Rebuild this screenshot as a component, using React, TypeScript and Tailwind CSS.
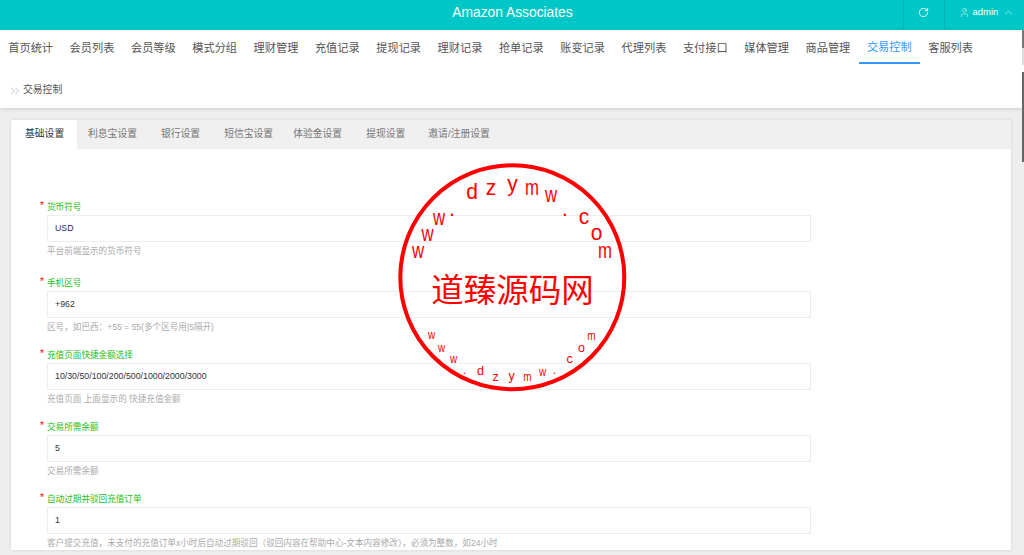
import { RotateCw, User, ChevronUp, ChevronsRight } from "lucide-react";

const nav = ["首页统计","会员列表","会员等级","模式分组","理财管理","充值记录","提现记录","理财记录","抢单记录","账变记录","代理列表","支付接口","媒体管理","商品管理","交易控制","客服列表"];
const tabs = [
  { t: "利息宝设置", c: "pl-[11px] pr-[12px]" },
  { t: "银行设置", c: "px-[12px]" },
  { t: "短信宝设置", c: "pl-[12px] pr-[10px]" },
  { t: "体验金设置", c: "pl-[10px] pr-[12px]" },
  { t: "提现设置", c: "px-[12px]" },
  { t: "邀请/注册设置", c: "pl-[11px] pr-[12px]" },
];
const fields = [
  { label: "货币符号", value: "USD", help: "平台前端显示的货币符号", gap: "mb-[14px]" },
  { label: "手机区号", value: "+962", help: "区号，如巴西：+55 = 55(多个区号用|5隔开)", gap: "mb-[10px]" },
  { label: "充值页面快捷金额选择", value: "10/30/50/100/200/500/1000/2000/3000", help: "充值页面 上面显示的 快捷充值金额", gap: "mb-[10px]" },
  { label: "交易所需余额", value: "5", help: "交易所需余额", gap: "mb-[10px]" },
  { label: "自动过期并驳回充值订单", value: "1", help: "客户提交充值，未支付的充值订单x小时后自动过期驳回（驳回内容在帮助中心-文本内容修改），必须为整数，如24小时", gap: "mb-[10px]" },
];
const big: [string, number, number][] = [["d",82,44],["z",101,40],["y",122.5,35.7],["m",142,40],["w",161,46.7],[".",175,61],["c",194,69],["o",206.5,85.3],["m",215,103.3],["w",28,103.3],["w",37.5,86],["w",49,69.7],[".",62,61]];
const small: [string, number, number][] = [["w",41.5,184.3],["w",51.5,196.7],["w",63.5,208],[".",74.5,218.7],["d",90.5,220],["z",105.5,226],["y",121.5,225],["m",137.5,226],["w",152.5,221.3],[".",164.5,218.7],["c",179.5,207.7],["o",191.5,196.7],["m",201.5,184.7]];
const narrow = (c: string) => c === "w" || c === "m";

function Stamp() {
  return (
    <svg className="absolute left-[390px] top-[155px] pointer-events-none" width="245" height="245" viewBox="0 0 245 245" fill="#f00" style={{ fontFamily: '"Liberation Sans", sans-serif' }}>
      <circle cx="122.3" cy="122.3" r="112" fill="none" stroke="#f00" strokeWidth="4" />
      {big.map(([c, x, y], i) => (
        <text key={i} textAnchor="middle" fontSize="21" transform={`translate(${x} ${y}) scale(${narrow(c) ? 0.8 : 1} 1.02)`}>{c}</text>
      ))}
      {small.map(([c, x, y], i) => (
        <text key={i} textAnchor="middle" fontSize="12.5" transform={`translate(${x} ${y}) scale(${narrow(c) ? 0.8 : 1} 1)`}>{c}</text>
      ))}
      <text x="122.5" y="147" textAnchor="middle" fontSize="32.5" style={{ fontFamily: '"Noto Sans CJK SC", sans-serif' }}>道臻源码网</text>
    </svg>
  );
}

export default function App() {
  return (
    <div className="relative h-[555px] w-[1024px] overflow-hidden bg-[#eeeeee] font-['Liberation_Sans','Noto_Sans_CJK_SC',sans-serif]">
      <header className="flex h-[30px] items-center bg-[#00c7c7] text-white">
        <div className="flex-1 pb-[4px] pl-[122px] text-center text-[13.8px]">Amazon Associates</div>
        <div className="flex h-full w-[40.5px] items-center justify-center border-l border-[#00b5b5] pb-[5px]">
          <RotateCw size={11} strokeWidth={2} />
        </div>
        <div className="flex h-full w-[80.5px] items-center gap-[3px] border-l border-[#00b5b5] pb-[5px] pl-[14px] text-[9.5px]">
          <User size={11} strokeWidth={1.2} />
          <span>admin</span>
          <ChevronUp size={13} strokeWidth={1} className="ml-[1px]" />
        </div>
      </header>

      <div className="relative z-10 bg-white shadow-[0_1px_4px_rgba(0,0,0,0.15)]">
        <nav className="flex h-[34px]">
          {nav.map((n) => {
            const on = n === "交易控制";
            return (
              <div key={n} className={`flex h-[33.5px] w-[61.33px] items-center justify-center pt-[3px] text-[11.2px] ${on ? "border-b-2 border-[#3399ff] text-[#3399ff]" : "text-[#555555]"}`}>
                {n}
              </div>
            );
          })}
        </nav>
        <div className="flex h-[44px] items-center pl-[8px] pt-[9px] text-[9.8px] text-[#555555]">
          <ChevronsRight size={14} strokeWidth={1} className="mr-[1px] text-[#999]" />
          交易控制
        </div>
      </div>

      <main className="ml-[11px] mt-[12px] w-[1000px] bg-white shadow-[0_0_3px_rgba(0,0,0,0.12)]">
        <div className="flex h-[29px] items-center border-b border-[#eeeeee] bg-[#f0f0f0] text-[9.8px] text-[#777]">
          <div className="flex h-[29px] w-[66px] items-center bg-white pl-[14px] text-[#333]">基础设置</div>
          {tabs.map((t) => (
            <div key={t.t} className={t.c}>{t.t}</div>
          ))}
        </div>
        <form className="pl-[29px] pt-[47px]">
          {fields.map((f) => (
            <div key={f.label} className={f.gap}>
              <div className="flex h-[19px] items-center pt-[3px] text-[8.6px] text-[#19be19]">
                <span className="w-[7px] -translate-y-[1px] text-[10px] leading-none text-[#f00]">*</span>
                {f.label}
              </div>
              <div className="ml-[7px] flex h-[27px] w-[764px] items-center border border-[#eeeeee] pl-[7px] text-[8.8px] text-[#333]">
                {f.value}
              </div>
              <div className="ml-[7px] flex h-[16px] items-center pt-[2px] text-[8.6px] text-[#aaaaaa]">{f.help}</div>
            </div>
          ))}
        </form>
      </main>

      <Stamp />
      <div className="absolute right-0 top-[30px] z-20 h-[18px] w-[2px] bg-[#777]" />
      <div className="absolute right-0 top-[48px] z-20 h-[17px] w-[2px] bg-[#ddd]" />
      <div className="absolute right-0 top-[72px] z-20 h-[90px] w-[2px] bg-[#666]" />
    </div>
  );
}
